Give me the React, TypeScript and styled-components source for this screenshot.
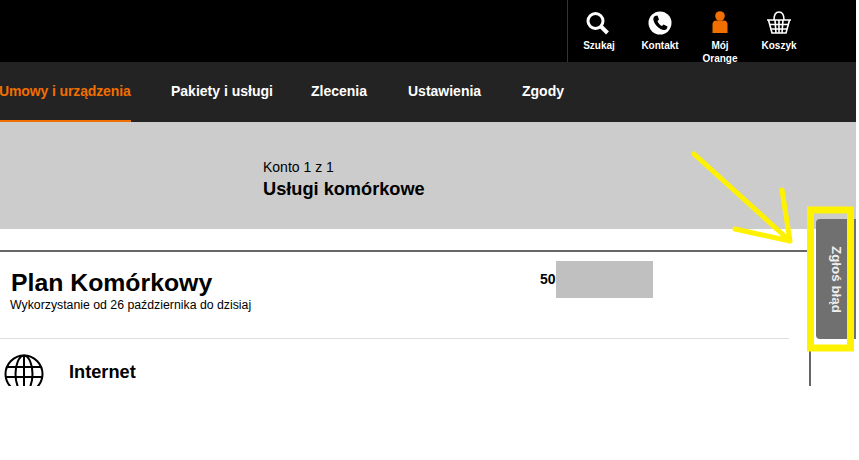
import React from "react";
import styled, { createGlobalStyle } from "styled-components";

const Global = createGlobalStyle`
  html, body { margin: 0; padding: 0; background: #fff; }
  body { font-family: "Liberation Sans", Arial, sans-serif; color: #000; }
`;
const Page = styled.div`
  position: relative;
  width: 856px;
  height: 386px;
  overflow: hidden;
  background: #fff;
`;
const TopBar = styled.header`
  height: 62px;
  background: #000;
  display: flex;
  justify-content: flex-end;
  padding-right: 36px;
`;
const Tools = styled.div`
  display: flex;
  border-left: 1px solid #333;
  padding-left: 12px;
  height: 62px;
`;
const Tool = styled.div<{ $w: number }>`
  width: ${(p) => p.$w}px;
  display: flex;
  flex-direction: column;
  align-items: center;
  padding-top: 11px;
  color: #fff;
  font-size: 10px;
  font-weight: 700;
  line-height: 13px;
  text-align: center;
  box-sizing: border-box;
`;
const IconSlot = styled.div`
  height: 24px;
  margin-bottom: 4px;
`;
const Nav = styled.nav`
  height: 60px;
  background: #232323;
  display: flex;
  gap: 40px;
`;
const NavItem = styled.div<{ $active?: boolean; $w: number }>`
  width: ${(p) => p.$w}px;
  height: 60px;
  box-sizing: border-box;
  display: flex;
  align-items: center;
  white-space: nowrap;
  font-size: 14px;
  font-weight: 700;
  letter-spacing: ${(p) => (p.$active ? "-0.12px" : "0")};
  color: ${(p) => (p.$active ? "#f16e00" : "#fff")};
  border-bottom: 2px solid ${(p) => (p.$active ? "#f16e00" : "transparent")};
`;
const NavLabel = styled.span<{ $shift?: boolean }>`
  margin-left: ${(p) => (p.$shift ? "-1px" : "0")};
`;
const Band = styled.section`
  height: 107px;
  background: #ccc;
  padding: 37px 0 0 263px;
  box-sizing: border-box;
`;
const BandSmall = styled.div`
  font-size: 14px;
  line-height: 17px;
`;
const BandTitle = styled.h2`
  margin: 3px 0 0;
  font-size: 18.2px;
  line-height: 21px;
  font-weight: 700;
`;
const Content = styled.div`
  margin-top: 21px;
  width: 811px;
  height: 136px;
  box-sizing: border-box;
  border-top: 2px solid #666;
  border-right: 2px solid #666;
`;
const PlanHead = styled.div`
  height: 87px;
  width: 789px;
  box-sizing: border-box;
  border-bottom: 1px solid #ddd;
  padding: 17px 0 0 10px;
  display: flex;
`;
const PlanText = styled.div`
  width: 530px;
`;
const PlanTitle = styled.h1`
  margin: 0;
  font-size: 24.8px;
  line-height: 28px;
  font-weight: 700;
  padding-left: 1px;
`;
const PlanSub = styled.div`
  font-size: 12.3px;
  line-height: 14px;
  margin-top: 1px;
`;
const Amount = styled.div`
  font-size: 14px;
  font-weight: 700;
  margin-top: -8px;
  line-height: 37px;
`;
const Redact = styled.div`
  width: 97px;
  height: 37px;
  margin-top: -8px;
  background: #c0c0c0;
`;
const InternetRow = styled.div`
  display: flex;
  align-items: flex-start;
  padding: 15px 0 0 4px;
  gap: 25px;
`;
const Globe = styled.svg`
  flex: none;
`;
const InternetLabel = styled.div`
  font-size: 18.2px;
  font-weight: 700;
  line-height: 20px;
  margin-top: 8px;
`;
const Report = styled.button`
  position: absolute;
  left: 816px;
  top: 219px;
  width: 40px;
  height: 120px;
  border: 0;
  padding: 0;
  border-radius: 4px 0 0 4px;
  background: #707070;
  color: #eee;
  font: 700 13.4px "Liberation Sans", sans-serif;
  writing-mode: vertical-rl;
  display: flex;
  align-items: center;
  justify-content: center;
`;
const Annotation = styled.svg`
  position: absolute;
  left: 0;
  top: 0;
  pointer-events: none;
`;

const Y = "#fff200";

export default function App() {
  return (
    <Page>
      <Global />
      <TopBar>
        <Tools>
          <Tool $w={38}>
            <IconSlot>
              <svg width="26" height="24" viewBox="0 0 26 24" fill="none" stroke="#fff">
                <circle cx="9.5" cy="10" r="7.5" strokeWidth="3" />
                <path d="M15 15.5 L21.5 22" strokeWidth="4" />
              </svg>
            </IconSlot>
            Szukaj
          </Tool>
          <Tool $w={84}>
            <IconSlot>
              <svg width="24" height="24" viewBox="0 0 24 24">
                <circle cx="12" cy="12" r="11.5" fill="#fff" />
                <path d="M7 5 L9.5 4.5 L11 8.5 L9.5 10 C10 12 12 14.5 14 15 L15.5 13.5 L19.5 15.5 L19 17.5 C17.5 19.5 15 19.5 12.5 18 C9 16 6.5 13 5.5 9.5 C5 7.5 5.5 6 7 5 Z" fill="#000" />
              </svg>
            </IconSlot>
            Kontakt
          </Tool>
          <Tool $w={36}>
            <IconSlot>
              <svg width="16" height="24" viewBox="0 0 16 24" fill="#f16e00">
                <circle cx="8" cy="5" r="4.8" />
                <path d="M0.5 22 V13 C0.5 10.5 2.5 9.5 4 9.5 H12 C13.5 9.5 15.5 10.5 15.5 13 V22 Z" />
              </svg>
            </IconSlot>
            Mój Orange
          </Tool>
          <Tool $w={82}>
            <IconSlot>
              <svg width="26" height="24" viewBox="0 0 26 24" fill="none" stroke="#fff" strokeWidth="1.6">
                <path d="M1 9 H25 M2.5 9 L6 22 H20 L23.5 9 M8 9 C8 3 10 1 13 1 C16 1 18 3 18 9" />
                <path d="M3.5 13.5 H22.5 M4.7 18 H21.3 M9 9 L10 22 M13 9 V22 M17 9 L16 22" />
              </svg>
            </IconSlot>
            Koszyk
          </Tool>
        </Tools>
      </TopBar>
      <Nav>
        <NavItem $active $w={131}><NavLabel $shift>Umowy i urządzenia</NavLabel></NavItem>
        <NavItem $w={100}><NavLabel>Pakiety i usługi</NavLabel></NavItem>
        <NavItem $w={57}><NavLabel>Zlecenia</NavLabel></NavItem>
        <NavItem $w={74}><NavLabel>Ustawienia</NavLabel></NavItem>
        <NavItem $w={42}><NavLabel>Zgody</NavLabel></NavItem>
      </Nav>
      <Band>
        <BandSmall>Konto 1 z 1</BandSmall>
        <BandTitle>Usługi komórkowe</BandTitle>
      </Band>
      <Content>
        <PlanHead>
          <PlanText>
            <PlanTitle>Plan Komórkowy</PlanTitle>
            <PlanSub>Wykorzystanie od 26 października do dzisiaj</PlanSub>
          </PlanText>
          <Amount>50</Amount>
          <Redact />
        </PlanHead>
        <InternetRow>
          <Globe width="40" height="34" viewBox="0 0 40 34" fill="none" stroke="#000" strokeWidth="2">
            <circle cx="20" cy="20" r="18.5" />
            <ellipse cx="20" cy="20" rx="8.5" ry="18.5" />
            <path d="M20 2 V38 M3 13 H37 M2 23 H38" />
          </Globe>
          <InternetLabel>Internet</InternetLabel>
        </InternetRow>
      </Content>
      <Report>Zgłoś błąd</Report>
      <Annotation width="856" height="386" viewBox="0 0 856 386" fill="none" stroke={Y}>
        <rect x="810.5" y="210" width="40" height="138" strokeWidth="7" />
        <path d="M694 154 L790 241 M782 190 L790 241 L735 229" strokeWidth="5" strokeLinecap="round" strokeLinejoin="round" />
      </Annotation>
    </Page>
  );
}
